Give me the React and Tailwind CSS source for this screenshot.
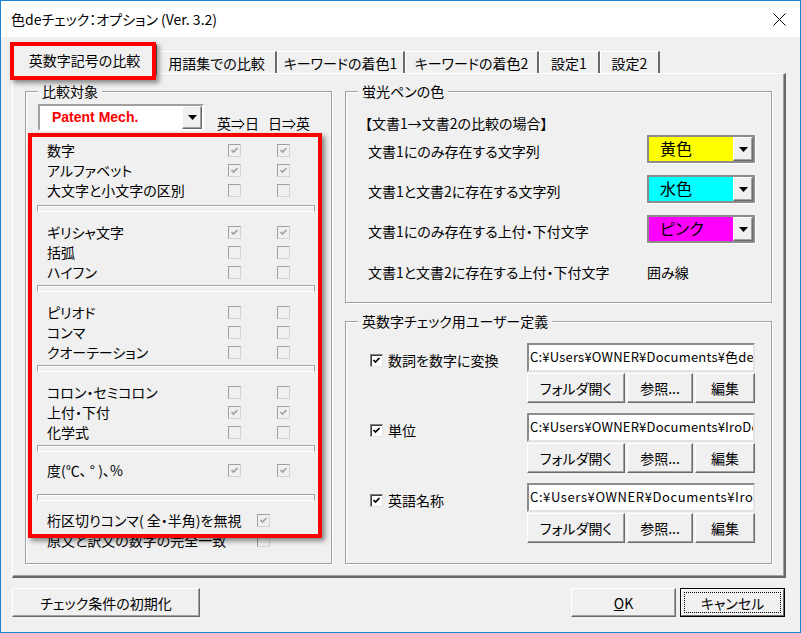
import React from "react";

function DCheck({ on }) {
  return (
    <span className="w-[13px] h-[13px] shrink-0 border border-t-[#a0a0a0] border-l-[#a0a0a0] border-b-[#d4d4d4] border-r-[#d4d4d4] flex items-center justify-center">
      {on && (
        <svg width="9" height="9" viewBox="0 0 9 9">
          <path d="M1.5 4 L3.5 6 L7.5 2" stroke="#a0a0a0" strokeWidth="1.7" fill="none" />
        </svg>
      )}
    </span>
  );
}

function ECheck() {
  return (
    <span className="w-[13px] h-[13px] shrink-0 bg-white border border-t-[#808080] border-l-[#808080] border-b-[#e3e3e3] border-r-[#e3e3e3] shadow-[inset_1px_1px_0_#404040] flex items-center justify-center">
      <svg width="9" height="9" viewBox="0 0 9 9">
        <path d="M1.5 4 L3.5 6 L7.5 2" stroke="#000" strokeWidth="1.7" fill="none" />
      </svg>
    </span>
  );
}

function Row({ label, a, b }) {
  return (
    <div className="flex items-center h-[20px] pl-[21px]">
      <span className="w-[181px] text-[14px] leading-[16px] whitespace-nowrap">{label}</span>
      <DCheck on={a} />
      <span className="w-[36px]" />
      <DCheck on={b} />
    </div>
  );
}

function Row1({ label, a }) {
  return (
    <div className="flex items-center h-[20px] pl-[21px]">
      <span className="w-[210px] text-[14px] leading-[16px] whitespace-nowrap">{label}</span>
      <DCheck on={a} />
    </div>
  );
}

function Sep({ cls }) {
  return (
    <div
      className={
        "ml-[11px] w-[278px] h-[7px] border border-[#a0a0a0] border-b-white shadow-[inset_1px_1px_0_#fff] " + cls
      }
    />
  );
}

function DDButton() {
  return (
    <div className="w-[20px] h-full shrink-0 bg-[#f0f0f0] border border-t-white border-l-white border-b-[#696969] border-r-[#696969] shadow-[inset_-1px_-1px_0_#a0a0a0] flex items-center justify-center">
      <svg width="9" height="5" viewBox="0 0 9 5">
        <polygon points="0,0 9,0 4.5,5" fill="#000" />
      </svg>
    </div>
  );
}

function ColorDD({ color, label }) {
  return (
    <div className="w-[108px] h-[28px] flex border-2 border-[#8c8c8c] shadow-[1px_1px_0_#fff]">
      <div className={"flex-1 pl-[11px] text-[16px] leading-[20px] pt-[1px] " + color}>{label}</div>
      <DDButton />
    </div>
  );
}

function CRow({ label, children, cls }) {
  return (
    <div className={"flex items-center justify-between h-[28px] pl-[22px] pr-[16px] " + cls}>
      <span className="text-[14px] leading-[16px] pt-[4px] whitespace-nowrap">{label}</span>
      {children}
    </div>
  );
}

const btn =
  "bg-[#f0f0f0] border border-t-white border-l-white border-b-[#696969] border-r-[#696969] shadow-[inset_-1px_-1px_0_#a0a0a0] flex items-center justify-center text-[14px] leading-[16px] whitespace-nowrap";

function UItem({ label, path, track }) {
  return (
    <div className="flex">
      <div className="w-[181px] pl-[24px] pt-[7px]">
        <div className="flex items-center h-[20px] gap-[5px]">
          <ECheck />
          <span className="text-[14px] leading-[16px] whitespace-nowrap">{label}</span>
        </div>
      </div>
      <div className="w-[228px] flex flex-col">
        <div
          className={
            "h-[29px] bg-white border-2 border-t-[#8c8c8c] border-l-[#8c8c8c] border-b-[#e3e3e3] border-r-[#e3e3e3] overflow-hidden whitespace-nowrap text-[13px] leading-[18px] pt-[3px] pl-[1px] " +
            track
          }
        >
          {path}
        </div>
        <div className="mt-[1px] flex gap-[2px] h-[30px]">
          <div className={"w-[98px] " + btn}>フォルダ開く</div>
          <div className={"w-[66px] " + btn}>参照...</div>
          <div className={"w-[60px] " + btn}>編集</div>
        </div>
      </div>
    </div>
  );
}

const frame = "border border-[#a0a0a0] shadow-[1px_1px_0_#fff,inset_1px_1px_0_#fff]";
const legend = "-mt-[9px] ml-[12px] px-[4px] w-fit bg-[#f0f0f0] text-[14px] leading-[16px] whitespace-nowrap";

export default function App() {
  return (
    <div className="w-[801px] h-[633px] border border-[#1883d7] bg-[#f0f0f0] flex flex-col text-black font-['Noto_Sans_CJK_JP',sans-serif] [font-feature-settings:'palt'] overflow-hidden">
      {/* title bar */}
      <div className="h-[36px] shrink-0 bg-white flex items-center justify-between pl-[10px] pr-[14px]">
        <span className="text-[14px] leading-[18px] whitespace-nowrap">色deチェック：オプション (Ver. 3.2)</span>
        <svg width="13" height="13" viewBox="0 0 13 13">
          <path d="M0.5 0.5 L12.5 12.5 M12.5 0.5 L0.5 12.5" stroke="#000" strokeWidth="1" fill="none" />
        </svg>
      </div>

      {/* tabs */}
      <div className="relative h-[36px] shrink-0 flex items-end pl-[12px]">
        <div className="relative z-10 -mb-[2px] w-[144px] h-[31px] flex items-center justify-center border-t border-l border-white border-r-2 border-r-[#696969] bg-[#f0f0f0] text-[14px] leading-[16px] whitespace-nowrap">
          英数字記号の比較
        </div>
        <div className="w-[120px] h-[22px] flex items-center justify-center border-t border-l border-white border-r-2 border-r-[#696969] text-[14px] leading-[16px] whitespace-nowrap">
          用語集での比較
        </div>
        <div className="w-[128px] h-[22px] flex items-center justify-center border-t border-l border-white border-r-2 border-r-[#696969] text-[14px] leading-[16px] whitespace-nowrap">
          キーワードの着色1
        </div>
        <div className="w-[134px] h-[22px] flex items-center justify-center border-t border-l border-white border-r-2 border-r-[#696969] text-[14px] leading-[16px] whitespace-nowrap">
          キーワードの着色2
        </div>
        <div className="w-[61px] h-[22px] flex items-center justify-center border-t border-l border-white border-r-2 border-r-[#696969] text-[14px] leading-[16px] whitespace-nowrap">
          設定1
        </div>
        <div className="w-[60px] h-[22px] flex items-center justify-center border-t border-l border-white border-r-2 border-r-[#696969] text-[14px] leading-[16px] whitespace-nowrap">
          設定2
        </div>
        <div className="absolute z-20 left-[9px] top-[5px] w-[146px] h-[38px] border-4 border-[#ff0000] shadow-[3px_3px_5px_rgba(0,0,0,0.45)] pointer-events-none" />
      </div>

      {/* tab page */}
      <div className="ml-[11px] w-[774px] h-[505px] shrink-0 border-t border-l border-white border-r-2 border-b-2 border-r-[#696969] border-b-[#696969] shadow-[inset_-1px_-1px_0_#a0a0a0] flex pt-[17px] pl-[12px] gap-[13px]">
        {/* left frame */}
        <div className={"w-[307px] h-[473px] " + frame}>
          <div className={legend}>比較対象</div>
          <div className="mt-[5px] ml-[12px] flex items-end">
            <div className="w-[166px] h-[27px] flex border-2 border-t-[#a0a0a0] border-l-[#a0a0a0] border-b-white border-r-white bg-white">
              <div className="flex-1 pl-[12px] flex items-center text-[14px] font-bold text-[#ff0000] font-['Liberation_Sans',sans-serif]">
                Patent Mech.
              </div>
              <DDButton />
            </div>
            <span className="ml-[13px] w-[51px] text-[14px] leading-[16px] whitespace-nowrap">英⇒日</span>
            <span className="text-[14px] leading-[16px] whitespace-nowrap">日⇒英</span>
          </div>

          <div className="relative mt-[9px]">
            <Row label="数字" a b />
            <Row label="アルファベット" a b />
            <Row label="大文字と小文字の区別" />
            <Sep cls="mt-[5px]" />
            <div className="mt-[10px]">
              <Row label="ギリシャ文字" a b />
              <Row label="括弧" />
              <Row label="ハイフン" />
            </div>
            <Sep cls="mt-[3px]" />
            <div className="mt-[10px]">
              <Row label="ピリオド" />
              <Row label="コンマ" />
              <Row label="クオーテーション" />
            </div>
            <Sep cls="mt-[3px]" />
            <div className="mt-[10px]">
              <Row label="コロン・セミコロン" />
              <Row label="上付・下付" a b />
              <Row label="化学式" />
            </div>
            <Sep cls="mt-[3px]" />
            <div className="mt-[8px]">
              <Row label="度(℃、 ° )、%" a b />
            </div>
            <Sep cls="mt-[14px]" />
            <div className="mt-[9px] flex flex-col">
              <Row1 label="桁区切りコンマ( 全・半角)を無視" a />
              <Row1 label="原文と訳文の数字の完全一致" />
            </div>
            <div className="absolute left-[2px] -top-[7px] w-[294px] h-[405px] border-4 border-[#ff0000] shadow-[3px_3px_5px_rgba(0,0,0,0.45)] pointer-events-none" />
          </div>
        </div>

        {/* right column */}
        <div className="flex flex-col">
          <div className={"w-[427px] h-[212px] " + frame}>
            <div className={legend}>蛍光ペンの色</div>
            <div className="mt-[16px] ml-[19px] text-[14px] leading-[16px] whitespace-nowrap">
              【文書1→文書2の比較の場合】
            </div>
            <CRow label="文書1にのみ存在する文字列" cls="mt-[4px]">
              <ColorDD color="bg-[#ffff00]" label="黄色" />
            </CRow>
            <CRow label="文書1と文書2に存在する文字列" cls="mt-[12px]">
              <ColorDD color="bg-[#00ffff]" label="水色" />
            </CRow>
            <CRow label="文書1にのみ存在する上付・下付文字" cls="mt-[12px]">
              <ColorDD color="bg-[#ff00ff]" label="ピンク" />
            </CRow>
            <CRow label="文書1と文書2に存在する上付・下付文字" cls="mt-[13px]">
              <span className="w-[108px] text-[14px] leading-[16px] pt-[4px]">囲み線</span>
            </CRow>
          </div>

          <div className={"w-[427px] h-[243px] mt-[18px] " + frame}>
            <div className={legend}>英数字チェック用ユーザー定義</div>
            <div className="mt-[14px] flex flex-col gap-[10px]">
              <UItem label="数詞を数字に変換" path="C:¥Users¥OWNER¥Documents¥色deチ" track="tracking-[0.2px]" />
              <UItem label="単位" path="C:¥Users¥OWNER¥Documents¥IroDeC" track="tracking-[0.2px]" />
              <UItem label="英語名称" path="C:¥Users¥OWNER¥Documents¥IroD" track="tracking-[0.6px]" />
            </div>
          </div>
        </div>
      </div>

      {/* bottom buttons */}
      <div className="flex justify-between items-start mt-[10px] pl-[11px] pr-[15px]">
        <div className={"w-[188px] h-[29px] " + btn}>チェック条件の初期化</div>
        <div className="flex gap-[4px]">
          <div className={"w-[105px] h-[29px] " + btn}>
            <span>
              <span className="underline">O</span>K
            </span>
          </div>
          <div className="w-[105px] h-[29px] border border-black">
            <div className="w-full h-full border border-t-white border-l-white border-b-[#696969] border-r-[#696969] bg-[#f0f0f0] p-[2px]">
              <div className="w-full h-full border border-dotted border-black flex items-center justify-center text-[14px] leading-[16px]">
                キャンセル
              </div>
            </div>
          </div>
        </div>
      </div>
    </div>
  );
}
